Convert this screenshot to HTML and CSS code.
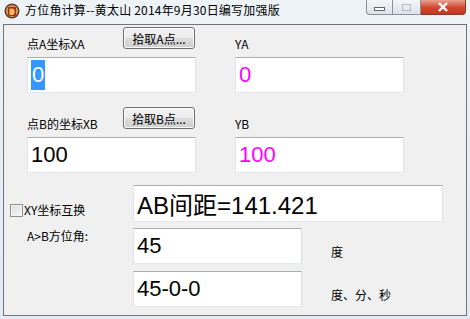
FILE: index.html
```html
<!DOCTYPE html>
<html lang="zh-CN">

<head>
    <meta charset="UTF-8">
    <meta name="viewport" content="width=device-width, initial-scale=1.0">
    <title>方位角计算</title>
    <link rel="stylesheet" href="styles.css">
</head>

<body>
    <div class="window">
        <div class="titlebar">
            <svg class="app-icon" width="16" height="16" viewBox="0 0 16 16">
                <circle cx="8" cy="8" r="7.5" fill="#6b3a1c" />
                <circle cx="8" cy="8" r="6" fill="#c9a06a" />
                <rect x="4" y="4" width="8" height="9" rx="1" fill="#b0281c" />
                <path d="M5.5 12V5.5h2.5a2.5 3 0 0 1 0 6.5z" fill="#f3c35a" />
            </svg>
            <span class="title">方位角计算--黄太山 2014年9月30日编写加强版</span>
            <div class="caption-buttons">
                <div class="cap-btn min"><span></span></div>
                <div class="cap-btn max"><span></span></div>
                <div class="cap-btn close">
                    <svg width="12" height="10" viewBox="0 0 12 10">
                        <path d="M2 1l8 8M10 1l-8 8" stroke="#fff" stroke-width="2.4" />
                    </svg>
                </div>
            </div>
        </div>

        <div class="client">
            <div class="points">
                <div class="field">
                    <div class="field-head">
                        <span class="label">点A坐标XA</span>
                        <button class="win-btn">拾取A点...</button>
                    </div>
                    <div class="edit"><span class="selected">0</span></div>
                </div>
                <div class="field">
                    <div class="field-head">
                        <span class="label">YA</span>
                    </div>
                    <div class="edit magenta">0</div>
                </div>
                <div class="field">
                    <div class="field-head">
                        <span class="label">点B的坐标XB</span>
                        <button class="win-btn">拾取B点...</button>
                    </div>
                    <div class="edit">100</div>
                </div>
                <div class="field">
                    <div class="field-head">
                        <span class="label">YB</span>
                    </div>
                    <div class="edit magenta">100</div>
                </div>
            </div>

            <div class="row">
                <div class="side">
                    <label class="check"><span class="box"></span>XY坐标互换</label>
                </div>
                <div class="edit wide">AB间距=141.421</div>
            </div>

            <div class="row angle-row">
                <div class="side">
                    <span class="label">A&gt;B方位角:</span>
                </div>
                <div class="edit">45</div>
                <span class="unit">度</span>
            </div>

            <div class="row dms-row">
                <div class="side"></div>
                <div class="edit">45-0-0</div>
                <span class="unit">度、分、秒</span>
            </div>
        </div>
    </div>
</body>

</html>
```

FILE: styles.css
```css
body {
    margin: 0;
    padding: 0;
    font-family: "Noto Sans CJK SC", sans-serif;
    font-size: 12px;
    color: #000;
}

.window {
    width: 470px;
    height: 319px;
    background: linear-gradient(#eef3f8, #e3eaf2);
    display: flex;
    flex-direction: column;
    overflow: hidden;
}

.titlebar {
    height: 24px;
    display: flex;
    align-items: flex-start;
    position: relative;
}

.app-icon {
    margin: 3px 0 0 4px;
}

.title {
    margin: 1px 0 0 5px;
    line-height: 18px;
    font-size: 12px;
    letter-spacing: 0.2px;
    white-space: nowrap;
}

.caption-buttons {
    position: absolute;
    top: 0;
    right: 4px;
    display: flex;
}

.cap-btn {
    height: 15px;
    border: 1px solid #8a919b;
    border-top: none;
    display: flex;
    justify-content: center;
    align-items: center;
    box-sizing: border-box;
}

.cap-btn.min {
    width: 27px;
    border-radius: 0 0 0 4px;
    background: linear-gradient(#f4f6f9, #dde3ea);
}

.cap-btn.min span {
    width: 9px;
    height: 2px;
    border: 1px solid #5f6770;
    background: #fff;
    margin-top: 3px;
}

.cap-btn.max {
    width: 28px;
    border-left: none;
    background: linear-gradient(#f4f6f9, #dde3ea);
}

.cap-btn.max span {
    width: 7px;
    height: 5px;
    border: 1px solid #b5bbc3;
}

.cap-btn.close {
    width: 45px;
    border-left: none;
    border-color: #8b3a2c;
    border-radius: 0 0 4px 0;
    background: linear-gradient(#e9a18f, #d0472f 55%, #c2361f);
}

.client {
    margin: 0 3px;
    height: 292px;
    box-sizing: border-box;
    border: 1px solid #6f747a;
    background: #f0f0f0;
    padding-top: 2px;
}

.points {
    display: grid;
    grid-template-columns: 169px 169px;
    column-gap: 39px;
    row-gap: 14px;
    padding-left: 23px;
}

.field-head {
    height: 30px;
    display: flex;
    justify-content: space-between;
    align-items: flex-start;
}

.label {
    margin-top: 9px;
    line-height: 16px;
    white-space: nowrap;
}

.win-btn {
    width: 72px;
    height: 22px;
    margin-right: 1px;
    padding: 0;
    font-family: "Noto Sans CJK SC", sans-serif;
    font-size: 12px;
    color: #000;
    border: 1px solid #707070;
    border-radius: 3px;
    background: linear-gradient(#f2f2f2, #ebebeb 50%, #dddddd 51%, #cfcfcf);
    box-shadow: inset 0 0 0 1px #fcfcfc;
}

.edit {
    width: 169px;
    height: 36px;
    box-sizing: border-box;
    background: #fff;
    border: 1px solid;
    border-color: #abadb3 #dbdfe6 #e3e9ef #e2e3ea;
    padding-left: 3px;
    display: flex;
    align-items: center;
    font-family: "Liberation Sans", "Noto Sans CJK SC", sans-serif;
    font-size: 22px;
    white-space: nowrap;
}

.edit.magenta {
    color: #ff00ff;
}

.edit.wide {
    width: 310px;
    height: 37px;
    font-size: 24px;
}

.selected {
    background: #3399ff;
    color: #fff;
    line-height: 30px;
    padding: 0 1px;
}

.row {
    display: flex;
    margin-top: 12px;
}

.side {
    width: 129px;
    flex-shrink: 0;
    display: flex;
}

.check {
    display: flex;
    align-items: center;
    align-self: flex-end;
    margin: 0 0 4px 6px;
    line-height: 16px;
}

.box {
    width: 11px;
    height: 11px;
    border: 1px solid #8e8f8f;
    background: linear-gradient(135deg, #dcdcdc, #f6f6f6);
    box-shadow: inset 0 0 0 1px #f4f4f4;
    margin-right: 1px;
}

.side .label {
    margin: 0 0 0 23px;
}

.angle-row {
    margin-top: 6px;
}

.dms-row {
    margin-top: 7px;
}

.unit {
    align-self: flex-end;
    margin: 0 0 4px 29px;
    line-height: 16px;
}
```
